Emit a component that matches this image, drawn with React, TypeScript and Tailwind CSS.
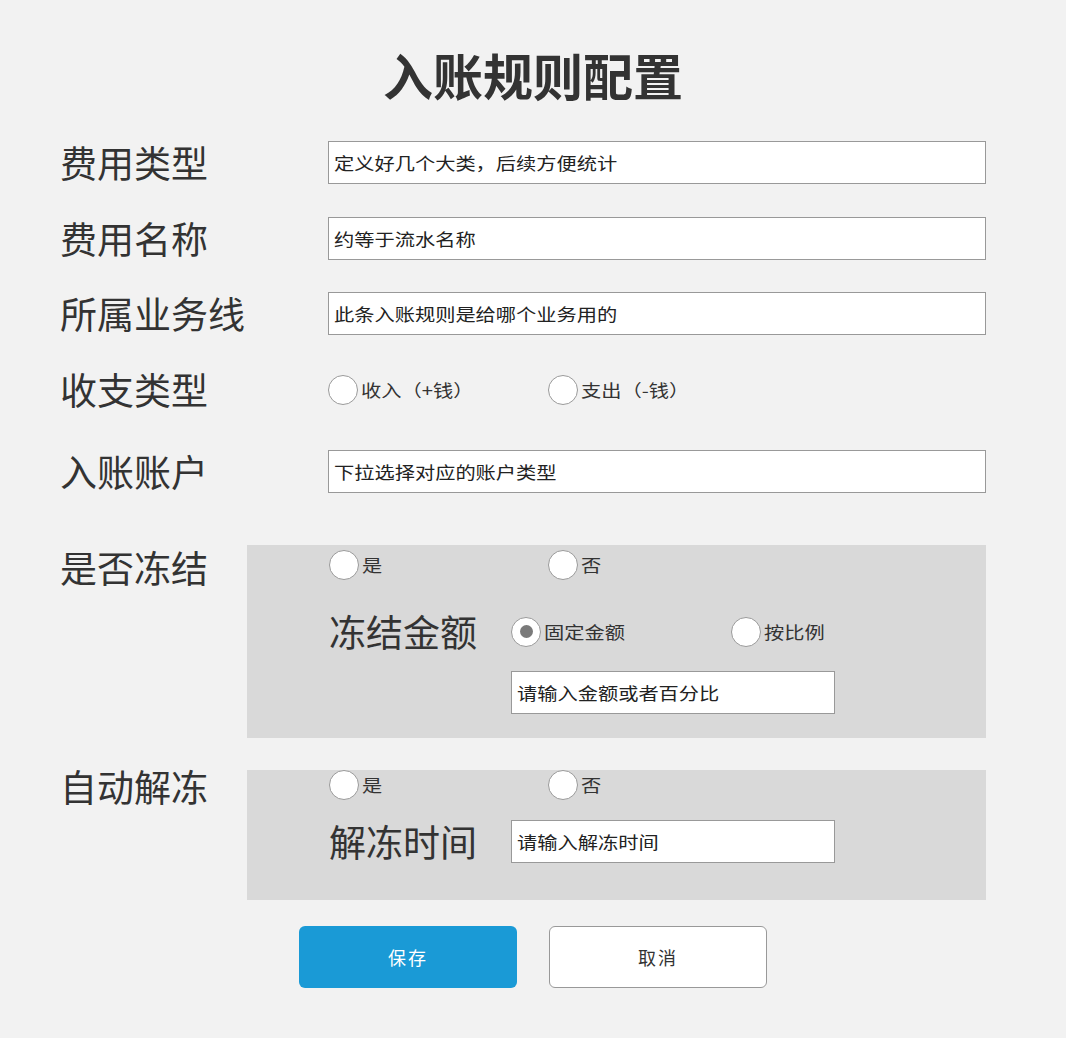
import React from 'react';

const font = { fontFamily: '"Noto Sans CJK SC", "Noto Sans", sans-serif' };

// the reference text is drawn slightly wide, so stretch it a little
const Wide: React.FC<{ children: React.ReactNode }> = ({ children }) => (
  <span className="inline-block origin-left scale-x-[1.19] whitespace-nowrap">{children}</span>
);

const Radio: React.FC<{ label: string; checked?: boolean; className?: string }> = ({ label, checked, className = '' }) => (
  <label className={`flex items-center ${className}`}>
    <span className="w-[30px] h-[30px] rounded-full border-[1.5px] border-[#9a9a9a] bg-white flex items-center justify-center shrink-0">
      {checked && <span className="w-[13px] h-[13px] rounded-full bg-[#7a7a7a]" />}
    </span>
    <span className="ml-[3px] text-[17px] text-[#333]">
      <Wide>{label}</Wide>
    </span>
  </label>
);

const TextBox: React.FC<{ value: string; className?: string }> = ({ value, className = '' }) => (
  <div className={`h-[43px] bg-white border-[1.5px] border-[#999] flex items-center px-[5px] text-[17px] text-[#222] ${className}`}>
    <Wide>{value}</Wide>
  </div>
);

const Row: React.FC<{ label: string; children: React.ReactNode; className?: string }> = ({ label, children, className = '' }) => (
  <div className={`flex items-center h-[43px] ${className}`}>
    <div className="w-[268px] text-[37px] text-[#333] leading-none">{label}</div>
    <div className="w-[658px]">{children}</div>
  </div>
);

export default function App() {
  return (
    <div className="w-[1066px] min-h-[1038px] bg-[#f2f2f2] pl-[60px]" style={font}>
      <h1 className="h-[141px] pt-[44px] text-[50px] font-bold text-[#333] leading-[60px] text-center pr-[60px]">
        入账规则配置
      </h1>

      <Row label="费用类型">
        <TextBox value="定义好几个大类，后续方便统计" />
      </Row>
      <Row label="费用名称" className="mt-[33px]">
        <TextBox value="约等于流水名称" />
      </Row>
      <Row label="所属业务线" className="mt-[32px]">
        <TextBox value="此条入账规则是给哪个业务用的" />
      </Row>
      <Row label="收支类型" className="mt-[33px]">
        <div className="flex items-center">
          <Radio label="收入（+钱）" className="w-[220px]" />
          <Radio label="支出（-钱）" />
        </div>
      </Row>
      <Row label="入账账户" className="mt-[39px]">
        <TextBox value="下拉选择对应的账户类型" />
      </Row>

      <div className="flex mt-[52px]">
        <div className="w-[187px] pt-[2px] text-[37px] text-[#333] leading-[40px]">是否冻结</div>
        <div className="w-[739px] h-[193px] bg-[#d9d9d9] pl-[82px] pt-[5px]">
          <div className="flex items-center">
            <Radio label="是" className="w-[219px]" />
            <Radio label="否" />
          </div>
          <div className="flex items-center mt-[33px]">
            <div className="w-[182px] text-[37px] text-[#333] leading-none">冻结金额</div>
            <Radio label="固定金额" checked className="w-[220px]" />
            <Radio label="按比例" />
          </div>
          <div className="pl-[182px] mt-[21px]">
            <TextBox value="请输入金额或者百分比" className="w-[324px]" />
          </div>
        </div>
      </div>

      <div className="flex mt-[32px]">
        <div className="w-[187px] text-[37px] text-[#333] leading-[32px]">自动解冻</div>
        <div className="w-[739px] h-[130px] bg-[#d9d9d9] pl-[82px]">
          <div className="flex items-center">
            <Radio label="是" className="w-[219px]" />
            <Radio label="否" />
          </div>
          <div className="flex items-center mt-[20px]">
            <div className="w-[182px] text-[37px] text-[#333] leading-none">解冻时间</div>
            <TextBox value="请输入解冻时间" className="w-[324px]" />
          </div>
        </div>
      </div>

      <div className="flex justify-center gap-[32px] mt-[26px] pr-[60px]">
        <button className="w-[218px] h-[62px] rounded-[6px] bg-[#1a9ad6] text-white text-[18px] tracking-[2px]">保存</button>
        <button className="w-[218px] h-[62px] rounded-[6px] bg-white border-[1.5px] border-[#999] text-[#333] text-[18px] tracking-[2px]">取消</button>
      </div>
    </div>
  );
}
